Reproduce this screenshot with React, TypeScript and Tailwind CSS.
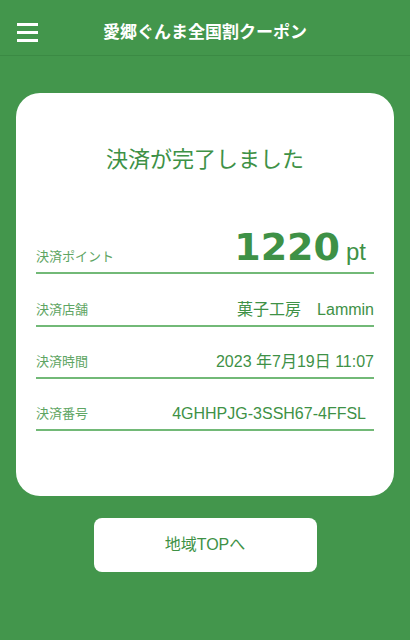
import { ReactNode } from 'react';

const rows = [
  { label: '決済店舗', value: '菓子工房　Lammin', h: 'h-[53px]', pad: '' },
  { label: '決済時間', value: '2023 年7月19日 11:07', h: 'h-[52px]', pad: '' },
  { label: '決済番号', value: '4GHHPJG-3SSH67-4FFSL', h: 'h-[52px]', pad: 'pr-2' },
];

function Row({ label, children, className }: { label: string; children: ReactNode; className: string }) {
  return (
    <div className={`flex items-end justify-between border-b-2 border-[#72b977] ${className}`}>
      <span className="text-[13px] leading-5 text-[#5ea563] pb-[5px]">{label}</span>
      {children}
    </div>
  );
}

export default function App() {
  return (
    <div
      className="min-h-[640px] bg-[#43964c]"
      style={{ fontFamily: '"Liberation Sans", "Noto Sans CJK JP", sans-serif' }}
    >
      {/* Header */}
      <header className="flex items-center h-14 pt-[10px] border-b border-[#3b8a44]">
        <div className="w-[38px] pl-[17px]">
          <svg width="21" height="19" viewBox="0 0 21 19" className="block">
            <rect x="0" y="0" width="21" height="3" fill="#fff" />
            <rect x="0" y="8" width="21" height="3" fill="#fff" />
            <rect x="0" y="16" width="21" height="3" fill="#fff" />
          </svg>
        </div>
        <h1 className="flex-1 text-center text-white font-bold text-[17px]">愛郷ぐんま全国割クーポン</h1>
        <div className="w-[38px]" />
      </header>

      {/* Card */}
      <div className="mx-4 mt-[37px] bg-white rounded-3xl px-5 pt-[51px] pb-[65px]">
        <h2 className="text-center text-[22px] leading-8 text-[#3e9146]">決済が完了しました</h2>

        <Row label="決済ポイント" className="h-[98px]">
          <div className="flex items-baseline pr-[8px] pb-[6px] text-[#3e9146]">
            <span
              className="text-[38px] leading-none font-bold"
              style={{ fontFamily: '"DejaVu Sans", sans-serif' }}
            >
              1220
            </span>
            <span className="text-[24px] leading-none ml-[6px]">pt</span>
          </div>
        </Row>

        {rows.map((r) => (
          <Row key={r.label} label={r.label} className={r.h}>
            <span className={`text-[16px] leading-5 text-[#3e9146] pb-[5px] ${r.pad}`}>{r.value}</span>
          </Row>
        ))}
      </div>

      {/* Button */}
      <div className="flex justify-center mt-[22px]">
        <button className="w-[223px] h-[54px] bg-white rounded-lg text-[16px] text-[#3e9146]">
          地域TOPへ
        </button>
      </div>
    </div>
  );
}
